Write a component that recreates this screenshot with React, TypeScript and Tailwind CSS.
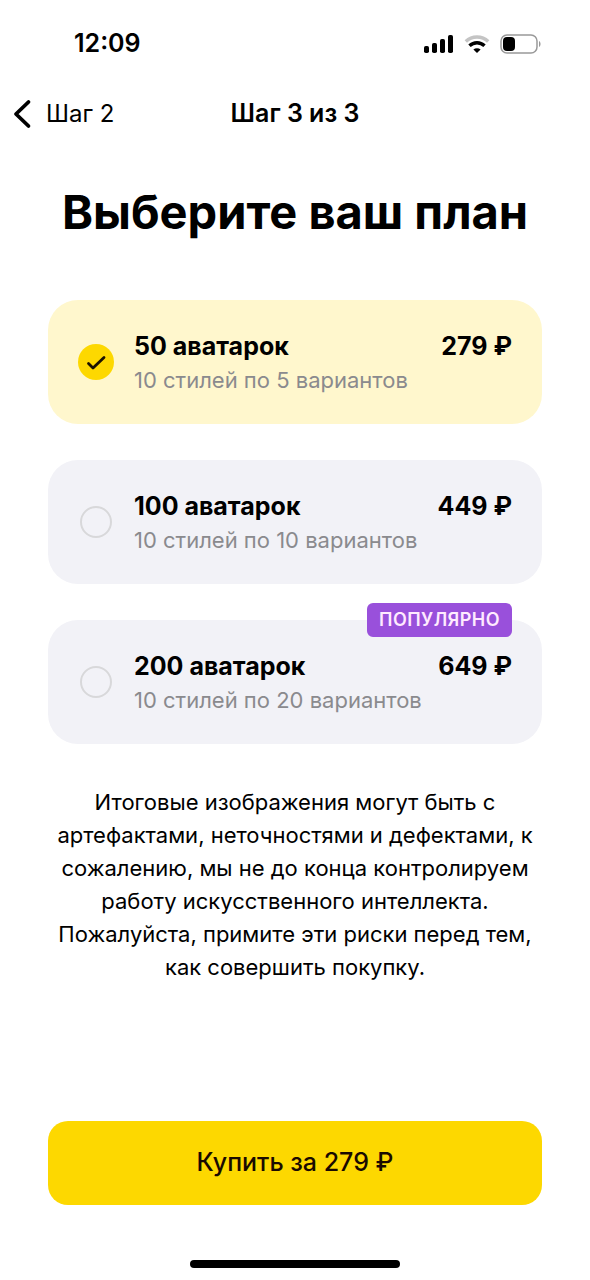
import { useState } from "react";

const plans = [
  { id: "50", title: "50 аватарок", note: "10 стилей по 5 вариантов", price: "279 ₽", popular: false },
  { id: "100", title: "100 аватарок", note: "10 стилей по 10 вариантов", price: "449 ₽", popular: false },
  { id: "200", title: "200 аватарок", note: "10 стилей по 20 вариантов", price: "649 ₽", popular: true },
];

function StatusBar() {
  return (
    <div className="flex h-22 items-center justify-between pr-12 pl-[74px]">
      <span className="text-[25px] font-semibold">12:09</span>
      <div className="flex items-center gap-2.5" aria-hidden="true">
        <svg width="30" height="20" viewBox="0 0 30 20">
          <rect x="0" y="12" width="5" height="7" rx="1.8" />
          <rect x="8" y="9" width="5" height="10" rx="1.8" />
          <rect x="16" y="5" width="5" height="14" rx="1.8" />
          <rect x="24" y="1" width="5" height="18" rx="1.8" />
        </svg>
        <svg width="26" height="20" viewBox="0 0 26 20" fill="none" stroke="#000" strokeWidth="3.4">
          <path d="M1.800 7.500a16 16 0 0 1 22.400 0" stroke="#c4c4c4" />
          <path d="M5.500 11.800a10.800 10.800 0 0 1 15 0" />
          <path d="M13 19l-3.600-3.400a5.200 5.200 0 0 1 7.200 0z" fill="#000" stroke="none" />
        </svg>
        <svg width="42" height="20" viewBox="0 0 42 20">
          <rect x="1" y="1" width="36" height="18" rx="6" fill="none" stroke="#999" strokeWidth="1.5" />
          <rect x="3" y="3" width="12" height="14" rx="4" />
          <path d="M39 7c2 1 2 5 0 6z" fill="#999" />
        </svg>
      </div>
    </div>
  );
}

export default function App() {
  const [selected, setSelected] = useState("50");
  const current = plans.find((p) => p.id === selected) ?? plans[0];
  return (
    <div className="flex min-h-screen flex-col bg-white font-['Inter',sans-serif] text-black">
      <StatusBar />
      <header className="grid h-13 grid-cols-[1fr_auto_1fr] items-center px-3">
        <a href="#step-2" className="flex items-center gap-3 text-2xl">
          <svg width="22" height="30" viewBox="0 0 22 30" fill="none" stroke="#000" strokeWidth="3.800" strokeLinecap="round" strokeLinejoin="round" aria-hidden="true">
            <path d="M16.500 3L4 15l12.500 12" />
          </svg>
          Шаг 2
        </a>
        <span className="text-[25px] font-semibold">Шаг 3 из 3</span>
      </header>
      <main className="flex flex-1 flex-col px-12 pt-10">
        <h1 id="plan-heading" className="text-center text-[47px] leading-16 font-bold whitespace-nowrap">
          Выберите ваш план
        </h1>
        <fieldset aria-labelledby="plan-heading" className="mt-14 flex flex-col gap-9">
          {plans.map((p) => (
            <label
              key={p.id}
              className="relative flex h-31 cursor-pointer items-center rounded-[30px] bg-[#f2f2f7] px-[30px] has-checked:bg-[#fff7cd]"
            >
              <input
                type="radio"
                name="plan"
                value={p.id}
                checked={selected === p.id}
                onChange={() => setSelected(p.id)}
                className="sr-only"
              />
              <span className="flex size-9 items-center justify-center">
                {selected === p.id ? (
                  <svg width="36" height="36" viewBox="0 0 36 36" fill="none" aria-hidden="true">
                    <circle cx="18" cy="18" r="18" fill="#fdd800" />
                    <path d="M10.500 19.500l4.500 4.500L26 13.500" stroke="#1a1200" strokeWidth="2.800" strokeLinecap="round" strokeLinejoin="round" />
                  </svg>
                ) : (
                  <span className="size-8 rounded-full border-2 border-[#d8d8da]" />
                )}
              </span>
              <span className="ml-5 flex-1">
                <span className="flex justify-between text-[25px] leading-9 font-bold">
                  <span>{p.title}</span>
                  <span>{p.price}</span>
                </span>
                <span className="block text-[22px] leading-8 text-[#8a8a8e]">{p.note}</span>
              </span>
              {p.popular && (
                <span className="absolute -top-[17px] right-[30px] flex h-[34px] items-center rounded-md bg-[#9950db] px-3 text-lg font-semibold tracking-wide text-[#ffeaff]">
                  ПОПУЛЯРНО
                </span>
              )}
            </label>
          ))}
        </fieldset>
        <p className="mt-[42px] text-center text-[22px] leading-[33px]">
          Итоговые изображения могут быть с артефактами, неточностями и дефектами, к сожалению, мы не до конца контролируем работу искусственного интеллекта. Пожалуйста, примите эти риски перед тем, как совершить покупку.
        </p>
        <button type="button" className="mt-auto h-21 rounded-[20px] bg-[#fdd800] text-[25px] font-medium text-[#1a0a00]">
          Купить за {current.price}
        </button>
      </main>
      <div className="flex h-[75px] items-end justify-center pb-3">
        <div className="h-2 w-[210px] rounded-full bg-black" />
      </div>
    </div>
  );
}
